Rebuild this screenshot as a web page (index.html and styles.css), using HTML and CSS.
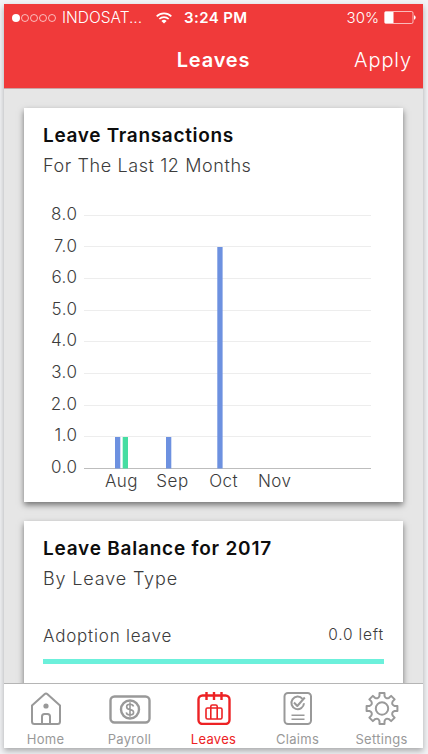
FILE: index.html
```
<!DOCTYPE html>
<html lang="en">
<head>
  <meta charset="UTF-8">
  <meta name="viewport" content="width=device-width, initial-scale=1.0">
  <title>Leaves</title>
  <link rel="stylesheet" href="styles.css">
</head>
<body>

  <div class="phone">
    <header class="header">
      <!-- Status bar -->
      <div class="status">
        <div class="signal">
          <i class="dot full"></i><i class="dot"></i><i class="dot"></i><i class="dot"></i><i class="dot"></i>
        </div>
        <span class="carrier">INDOSAT...</span>
        <svg class="wifi" width="16" height="12" viewBox="0 0 16 12" fill="none" stroke="#fff" stroke-width="1.7">
          <path d="M0.7 4.3a10.4 10.4 0 0 1 14.6 0M3.3 7a6.7 6.7 0 0 1 9.4 0"/>
          <path d="M8 11.6L5.4 9a3.7 3.7 0 0 1 5.2 0z" fill="#fff" stroke="none"/>
        </svg>
        <span class="time">3:24 PM</span>
        <span class="percent">30%</span>
        <svg class="battery" width="32" height="13" viewBox="0 0 32 13">
          <rect x="0.5" y="0.5" width="28.5" height="12" rx="1.5" fill="none" stroke="#fff" stroke-opacity="0.65"/>
          <rect x="1" y="1" width="8.5" height="11" fill="#fff"/>
          <path d="M30 4.3a2.3 2.3 0 0 1 0 4.4z" fill="#fff"/>
        </svg>
      </div>
      <div class="nav">
        <h1>Leaves</h1>
        <a class="apply">Apply</a>
      </div>
    </header>

    <main class="content">
      <section class="card transactions">
        <h2 class="title-transactions">Leave Transactions</h2>
        <p class="sub sub-transactions">For The Last 12 Months</p>
        <svg class="chart" width="340" height="290" viewBox="0 0 340 290">
          <g class="grid">
            <path d="M41 10.5h287M41 41.5h287M41 73.5h287M41 105.5h287M41 136.5h287M41 168.5h287M41 200.5h287M41 231.5h287"/>
          </g>
          <g class="labels">
            <text x="34.5" y="15">8.0</text>
            <text x="34.5" y="46.5">7.0</text>
            <text x="34.5" y="78">6.0</text>
            <text x="34.5" y="110">5.0</text>
            <text x="34.5" y="141">4.0</text>
            <text x="34.5" y="173">3.0</text>
            <text x="34.5" y="205">2.0</text>
            <text x="34.5" y="236">1.0</text>
            <text x="34.5" y="268">0.0</text>
          </g>
          <path class="axis" d="M41 263.5h287"/>
          <g class="blue">
            <rect x="72" y="232" width="5.3" height="31.5"/>
            <rect x="123" y="232" width="5.3" height="31.5"/>
            <rect x="174.3" y="42" width="5.3" height="221.5"/>
          </g>
          <rect class="green" x="79.7" y="232" width="5.3" height="31.5"/>
          <g class="months">
            <text x="78.5" y="281.5">Aug</text>
            <text x="129.5" y="281.5">Sep</text>
            <text x="180.7" y="281.5">Oct</text>
            <text x="231.7" y="281.5">Nov</text>
          </g>
        </svg>
      </section>

      <section class="card balance">
        <h2 class="title-balance">Leave Balance for 2017</h2>
        <p class="sub sub-balance">By Leave Type</p>
        <div class="leave">
          <span class="leave-name">Adoption leave</span>
          <span class="leave-left">0.0 left</span>
        </div>
        <div class="bar"></div>
      </section>
    </main>

    <nav class="tabs">
      <a class="tab">
        <svg width="42" height="36" viewBox="0 0 42 36">
          <path d="M7 16.5L19.5 5.2a2.2 2.2 0 0 1 3 0L35 16.5v16a2.5 2.5 0 0 1-2.5 2.5h-23A2.5 2.5 0 0 1 7 32.5z"/>
          <path d="M17 35v-7.500a2.500 2.500 0 0 1 2.500-2.500h3a2.500 2.500 0 0 1 2.500 2.500v7.500"/>
          <circle class="fill" cx="21" cy="17" r="2.6"/>
        </svg>
        <span>Home</span>
      </a>
      <a class="tab">
        <svg class="thick" width="42" height="36" viewBox="0 0 42 36">
          <rect x="1.5" y="7.5" width="39" height="26" rx="4"/>
          <circle cx="21" cy="20.5" r="9"/>
          <path class="thin" d="M24.500 17.500c-.4-1.600-1.800-2.200-3.500-2.200-4.500 0-4.500 4.600 0 5.200 4.800.7 4.800 5.400 0 5.400-2 0-3.500-.8-3.700-2.600M21 13.300v14.400"/>
        </svg>
        <span>Payroll</span>
      </a>
      <a class="tab active">
        <svg class="thick" width="42" height="36" viewBox="0 0 42 36">
          <rect x="5.500" y="6.500" width="31" height="28.500" rx="4"/>
          <path d="M13.500 3v8M21 3v8M28.500 3v8"/>
          <path class="thin" d="M14.500 19h13a1.500 1.500 0 0 1 1.500 1.500v8a1.500 1.500 0 0 1-1.500 1.500h-13a1.500 1.500 0 0 1-1.500-1.500v-8a1.500 1.500 0 0 1 1.500-1.500zM17.800 30V17.500q0-1.500 1.500-1.500h3.400q1.500 0 1.500 1.500V30"/>
        </svg>
        <span>Leaves</span>
      </a>
      <a class="tab">
        <svg width="42" height="36" viewBox="0 0 42 36">
          <rect x="7.500" y="4" width="26.500" height="31" rx="3.500"/>
          <path d="M25.500 9.800a6.300 6.300 0 1 0 1.500 4.500"/>
          <path d="M17 13.500l3.300 3.500 7.500-8.500"/>
          <path class="thin" d="M14.500 26.300h13M14.500 30.300h13"/>
        </svg>
        <span>Claims</span>
      </a>
      <a class="tab">
        <svg width="42" height="36" viewBox="0 0 42 36">
          <path id="gear" d=""/>
          <circle cx="21" cy="19.5" r="6.2"/>
        </svg>
        <span>Settings</span>
      </a>
    </nav>
  </div>

  <script>
    // Draws the eight teeth of the settings icon
    let d = '';
    const point = (r, a) => (21 + r * Math.sin(a)).toFixed(2) + ' ' + (19.5 - r * Math.cos(a)).toFixed(2);
    for (let i = 0; i < 8; i++) {
      const a = i * Math.PI / 4;
      d += (i ? 'L' : 'M') + point(12.8, a - 0.2);
      d += 'L' + point(15.6, a - 0.16);
      d += 'L' + point(15.6, a + 0.16);
      d += 'L' + point(12.8, a + 0.2);
      d += 'Q' + point(9.8, a + Math.PI / 8) + ' ' + point(12.8, a + Math.PI / 4 - 0.2);
    }
    document.getElementById('gear').setAttribute('d', d + 'Z');
  </script>

</body>
</html>
```
FILE: styles.css
```
* {
  margin: 0;
  padding: 0;
  box-sizing: border-box;
}

body {
  height: 754px;
  padding: 4px 5px 6px 4px;
  background: #f2f3f5;
  font-family: Inter, "Open Sans", sans-serif;
  overflow: hidden;
}

.phone {
  height: 744px;
  display: flex;
  flex-direction: column;
  background: #e6e6e6;
  box-shadow: 0 3px 6px rgba(0, 0, 0, 0.3);
}

/* Header */
.header {
  height: 85px;
  background: #f03a3a;
  color: #fff;
  border-bottom: 1px solid #c9a5a5;
}

.status {
  height: 27px;
  padding: 0 7px 0 8px;
  display: flex;
  align-items: center;
  font-size: 15.5px;
  white-space: nowrap;
}

.signal {
  width: 50px;
  display: flex;
  gap: 1px;
}

.dot {
  width: 8px;
  height: 8px;
  border: 1px solid rgba(255, 255, 255, 0.65);
  border-radius: 50%;
}

.full {
  background: #fff;
}

.carrier {
  width: 94px;
  font-weight: 300;
}

.time {
  margin-left: 12px;
  font-weight: 600;
  font-size: 15px;
  letter-spacing: 0.4px;
}

.percent {
  margin-left: auto;
  font-weight: 300;
  font-size: 15px;
}

.battery {
  margin-left: 5px;
}

.nav {
  height: 57px;
  padding: 0 12px;
  display: grid;
  grid-template-columns: 1fr auto 1fr;
  align-items: center;
}

.nav h1 {
  grid-column: 2;
  font-size: 20px;
  font-weight: 600;
  letter-spacing: 0.8px;
}

.apply {
  margin-right: -1px;
  text-align: right;
  font-size: 20px;
  font-weight: 300;
  letter-spacing: 0.9px;
}

/* Cards */
.content {
  flex: 1;
  min-height: 0;
  padding: 19px 20px 0 20px;
  overflow: hidden;
}

.card {
  padding: 17px 19px 0;
  background: #fff;
  box-shadow: 0 3px 6px rgba(0, 0, 0, 0.5);
}

.transactions {
  height: 394px;
  margin-bottom: 19px;
}

.balance {
  height: 200px;
}

.card h2 {
  font-size: 19px;
  line-height: 22px;
  font-weight: 600;
  color: #0d0d0d;
  white-space: nowrap;
}

.title-transactions {
  letter-spacing: 0.68px;
}

.title-balance {
  letter-spacing: 0.78px;
}

.sub {
  margin-top: 7px;
  font-size: 18px;
  line-height: 24px;
  font-weight: 300;
  color: #3c3c3c;
}

.sub-transactions {
  letter-spacing: 0.6px;
}

.sub-balance {
  letter-spacing: 0.85px;
}

.chart {
  display: block;
  margin-top: 27px;
}

.chart text {
  font-size: 17px;
  font-weight: 300;
  fill: #3c3c3c;
}

.grid path {
  stroke: #ededed;
}

.axis {
  stroke: #bdbdbd;
}

.labels text {
  text-anchor: end;
  letter-spacing: 0.5px;
}

.months text {
  text-anchor: middle;
  letter-spacing: 0.5px;
}

.blue {
  fill: #6d91e0;
}

.green {
  fill: #45dda2;
}

.leave {
  height: 24px;
  margin-top: 33px;
  display: flex;
  justify-content: space-between;
  font-weight: 300;
  line-height: 24px;
  color: #3c3c3c;
}

.leave-name {
  font-size: 17px;
  letter-spacing: 0.8px;
}

.leave-left {
  margin-top: -1px;
  font-size: 15.5px;
  letter-spacing: 0.8px;
}

.bar {
  height: 5px;
  margin-top: 11px;
  background: #6cf0db;
}

/* Tab bar */
.tabs {
  height: 65px;
  padding-top: 5px;
  display: flex;
  justify-content: space-between;
  border-top: 1px solid #b5b5b5;
  background: #fff;
}

.tab {
  width: 83px;
  display: flex;
  flex-direction: column;
  align-items: center;
  font-size: 13px;
  line-height: 16px;
  letter-spacing: 0.3px;
  color: #999;
}

.tab svg {
  fill: none;
  stroke: currentColor;
  stroke-width: 2;
  stroke-linejoin: round;
}

.tab svg.thick {
  stroke-width: 2.4;
}

.tab .thin {
  stroke-width: 1.6;
}

.tab .fill {
  fill: currentColor;
  stroke: none;
}

.tab span {
  margin-top: 6px;
}

.active {
  color: #ed2224;
}
```
